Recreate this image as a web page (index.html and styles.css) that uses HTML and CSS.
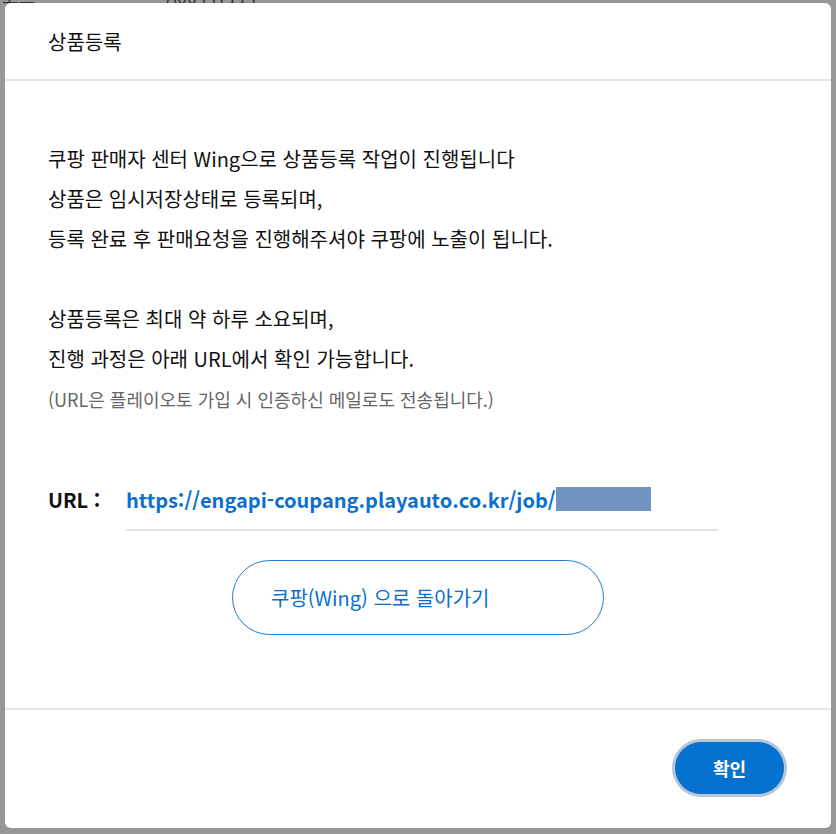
FILE: index.html
```html
<!DOCTYPE html>
<html lang="ko">

<head>
    <meta charset="UTF-8">
    <meta name="viewport" content="width=device-width, initial-scale=1.0">
    <title>상품등록</title>
    <link rel="stylesheet" href="styles.css">
</head>

<body>
    <div id="backdrop">
        <div class="bg-text bg-top">코드</div>
        <div class="bg-text bg-code">A00447114</div>
        <div id="modal">
            <div class="modal-header">상품등록</div>
            <div class="modal-body">
                <p class="msg">
                    쿠팡 판매자 센터 Wing으로 상품등록 작업이 진행됩니다<br>
                    상품은 임시저장상태로 등록되며,<br>
                    등록 완료 후 판매요청을 진행해주셔야 쿠팡에 노출이 됩니다.
                </p>
                <p class="msg">
                    상품등록은 최대 약 하루 소요되며,<br>
                    진행 과정은 아래 URL에서 확인 가능합니다.
                </p>
                <p class="note">(URL은 플레이오토 가입 시 인증하신 메일로도 전송됩니다.)</p>
                <div class="url-row">
                    <span class="url-label">URL :</span>
                    <span class="url-link">https://engapi-coupang.playauto.co.kr/job/<span class="mask"></span></span>
                </div>
                <div class="url-line"></div>
                <div class="wing-wrap">
                    <div class="wing-btn">쿠팡(Wing) 으로 돌아가기</div>
                </div>
            </div>
            <div class="modal-footer">
                <div class="ok-btn">확인</div>
            </div>
        </div>
    </div>
</body>

</html>
```

FILE: styles.css
```css
body {
    margin: 0;
    font-family: "Noto Sans CJK KR", "Noto Sans", sans-serif;
    background-color: #979797;
}

#backdrop {
    position: relative;
    width: 836px;
    height: 834px;
    padding: 3px 5px 6px 5px;
    box-sizing: border-box;
    overflow: hidden;
}

.bg-text {
    position: absolute;
    font-size: 18px;
    color: #333;
}

.bg-top {
    left: 2px;
    top: -17px;
}

.bg-code {
    left: 166px;
    top: -17px;
}

#modal {
    position: relative;
    height: 825px;
    background-color: #fff;
    border-radius: 6px;
    display: flex;
    flex-direction: column;
}

.modal-header {
    height: 78px;
    box-sizing: border-box;
    padding-left: 43px;
    display: flex;
    align-items: center;
    font-size: 20px;
    color: #111;
    border-bottom: 2px solid #e5e5e5;
}

.modal-body {
    flex: 1;
    padding: 58px 43px 0 43px;
    border-bottom: 2px solid #e5e5e5;
}

.msg {
    margin: 0 0 40px 0;
    font-size: 20px;
    line-height: 40px;
    color: #111;
}

.msg + .msg {
    margin-bottom: 0;
}

.note {
    margin: 0;
    font-size: 18px;
    line-height: 40px;
    color: #666;
}

.url-row {
    margin-top: 60px;
    display: flex;
    align-items: center;
    height: 40px;
}

.url-label {
    width: 78px;
    font-size: 20px;
    font-weight: bold;
    color: #111;
}

.url-link {
    display: flex;
    align-items: center;
    font-size: 20px;
    font-weight: bold;
    color: #0b6fcf;
}

.mask {
    display: inline-block;
    width: 95px;
    height: 24px;
    background-color: #7093bf;
}

.url-line {
    margin: 10px 0 0 78px;
    width: 592px;
    height: 2px;
    background-color: #e3e3e3;
}

.wing-wrap {
    margin-top: 29px;
    padding-left: 184px;
}

.wing-btn {
    width: 372px;
    height: 75px;
    box-sizing: border-box;
    border: 1.5px solid #1a7bd2;
    border-radius: 38px;
    padding-left: 38px;
    display: flex;
    align-items: center;
    font-size: 20px;
    color: #0b6fcf;
}

.modal-footer {
    height: 118px;
    display: flex;
    justify-content: flex-end;
    padding: 32px 47px 0 0;
    box-sizing: border-box;
}

.ok-btn {
    width: 109px;
    height: 52px;
    border-radius: 26px;
    background-color: #0572cf;
    box-shadow: 0 0 0 3px #b5c6da;
    color: #fff;
    font-size: 18px;
    font-weight: bold;
    display: flex;
    align-items: center;
    justify-content: center;
}
```
